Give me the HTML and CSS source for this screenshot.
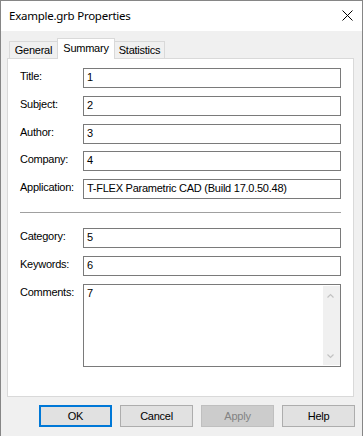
FILE: index.html
```html
<!DOCTYPE html>
<html>
<head>
<meta charset="utf-8">
<title>Example.grb Properties</title>
<link rel="stylesheet" href="styles.css">
</head>
<body>
<div class="window">
  <div class="titlebar">
    <span class="title">Example.grb Properties</span>
    <svg class="close" width="11" height="11" viewBox="0 0 11 11">
      <path d="M0.5 0.5 L10.5 10.5 M10.5 0.5 L0.5 10.5" stroke="#000" stroke-width="1" fill="none"/>
    </svg>
  </div>
  <div class="client">
    <div class="tabs">
      <div class="tab">General</div>
      <div class="tab active">Summary</div>
      <div class="tab">Statistics</div>
    </div>
    <div class="panel">
      <div class="form">
        <label class="lbl">Title:</label><div class="field">1</div>
        <label class="lbl">Subject:</label><div class="field">2</div>
        <label class="lbl">Author:</label><div class="field">3</div>
        <label class="lbl">Company:</label><div class="field">4</div>
        <label class="lbl">Application:</label><div class="field">T-FLEX Parametric CAD (Build 17.0.50.48)</div>
      </div>
      <div class="sep"></div>
      <div class="form">
        <label class="lbl">Category:</label><div class="field">5</div>
        <label class="lbl">Keywords:</label><div class="field">6</div>
        <label class="lbl">Comments:</label>
        <div class="field memo">
          <div class="memo-text">7</div>
          <div class="vscroll">
            <svg width="17" height="17" viewBox="0 0 17 17"><polyline points="4.5,11.5 7.5,8.5 10.5,11.5" fill="none" stroke="#c2c2c2" stroke-width="1.2"/></svg>
            <svg width="17" height="17" viewBox="0 0 17 17"><polyline points="4.5,6.5 7.5,9.5 10.5,6.5" fill="none" stroke="#c2c2c2" stroke-width="1.2"/></svg>
          </div>
        </div>
      </div>
    </div>
    <div class="buttons">
      <div class="btn default">OK</div>
      <div class="btn">Cancel</div>
      <div class="btn disabled">Apply</div>
      <div class="btn">Help</div>
    </div>
  </div>
</div>
</body>
</html>
```

FILE: styles.css
```css
html, body {
  margin: 0;
  padding: 0;
  background: #f0f0f0;
}
* { box-sizing: border-box; }

.window {
  width: 363px;
  height: 436px;
  border: 1px solid #868686;
  border-bottom: none;
  background: #f0f0f0;
  font-family: "Liberation Sans", Arial, sans-serif;
  font-size: 11px;
  letter-spacing: -0.25px;
  color: #000;
  overflow: hidden;
}

.titlebar {
  height: 30px;
  background: #fff;
  display: flex;
  align-items: center;
  justify-content: space-between;
  padding: 0 9px 0 8px;
}
.title {
  font-family: "Noto Sans", "Segoe UI", sans-serif;
  font-size: 11.5px;
  letter-spacing: -0.25px;
  line-height: 16px;
}
.close { display: block; margin-top: -1px; }

.client {
  padding: 7px 8px 0 6px;
}

.tabs {
  display: flex;
  align-items: flex-end;
  height: 20px;
  margin-left: 2px;
}
.tab {
  height: 17px;
  border: 1px solid #d9d9d9;
  border-bottom: none;
  background: #f0f0f0;
  padding: 2px 0 0;
  text-align: center;
  line-height: 13px;
}
.tab:nth-child(1) { width: 49px; }
.tab:nth-child(2) { width: 58px; margin-left: -1px; }
.tab:nth-child(3) { width: 51px; margin-left: -1px; }
.tab.active {
  height: 21px;
  margin-bottom: -1px;
  background: #fff;
  position: relative;
  z-index: 1;
  padding-top: 3px;
}

.panel {
  height: 339px;
  background: #fff;
  border: 1px solid #d9d9d9;
  padding: 9px 12px 0 12px;
}

.form {
  display: grid;
  grid-template-columns: 63px 258px;
  grid-auto-rows: 20px;
  row-gap: 7.75px;
}
.lbl {
  padding-top: 2px;
  line-height: 13px;
  white-space: nowrap;
}
.field {
  border: 1px solid #7a7a7a;
  background: #fff;
  padding: 2px 3px 0;
  line-height: 13px;
  white-space: nowrap;
  overflow: hidden;
}
.sep {
  height: 1px;
  background: #a0a0a0;
  margin: 13px 0 15px 0;
  width: 321px;
}
.memo {
  height: 83px;
  display: flex;
  padding: 0;
}
.memo-text {
  flex: 1;
  padding: 2px 3px 0;
}
.vscroll {
  width: 17px;
  background: #f0f0f0;
  display: flex;
  flex-direction: column;
  justify-content: space-between;
  margin: 1px 0;
}
.vscroll svg { display: block; }

.buttons {
  display: flex;
  justify-content: flex-end;
  gap: 8px;
  margin-top: 8px;
  margin-right: -1px;
}
.btn {
  width: 73px;
  height: 22px;
  background: #e1e1e1;
  border: 1px solid #adadad;
  text-align: center;
  line-height: 20px;
}
.btn.default {
  border: 2px solid #0078d7;
  line-height: 18px;
}
.btn.disabled {
  background: #cccccc;
  border-color: #bfbfbf;
  color: #838383;
}
```
